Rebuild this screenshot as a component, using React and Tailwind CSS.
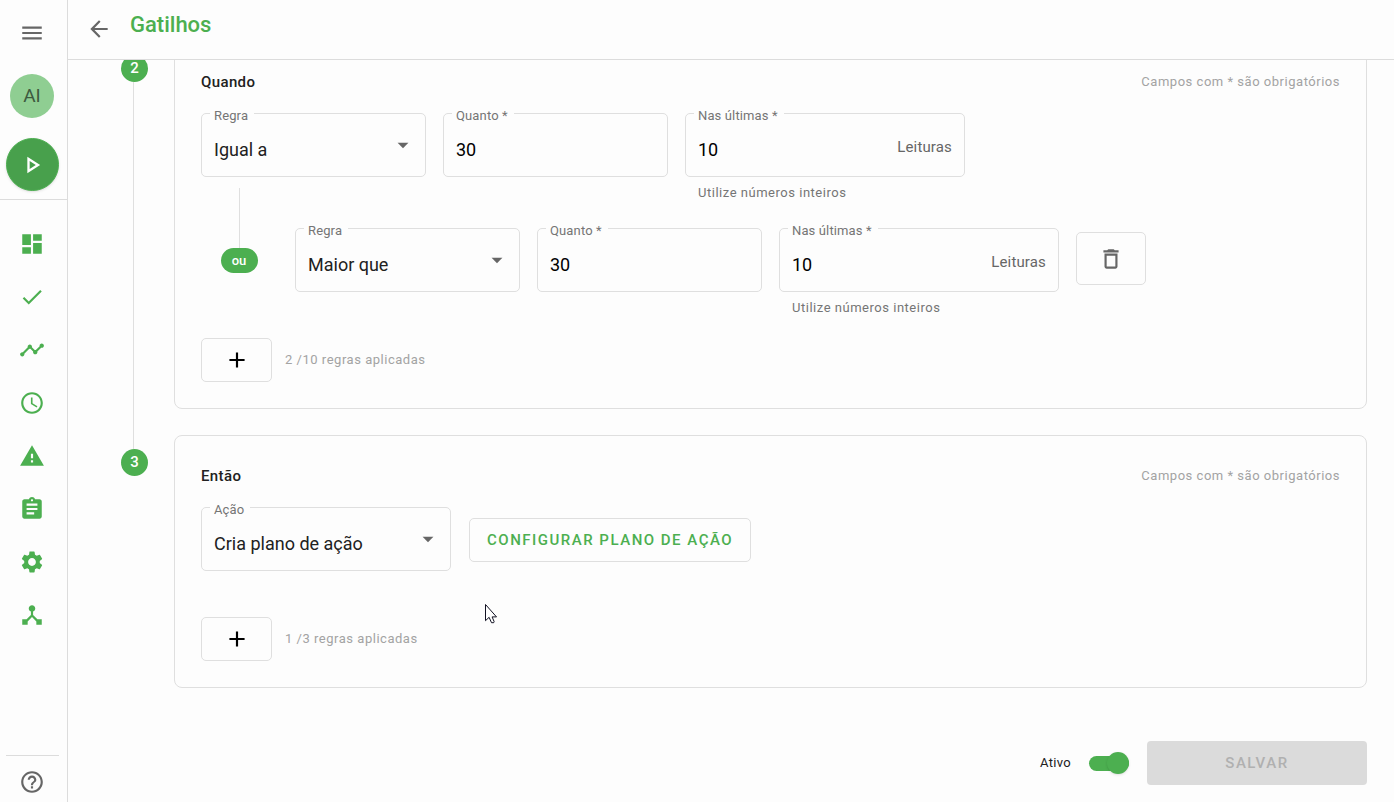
import React, { useState } from 'react';
import {
  MdAccessTime,
  MdAdd,
  MdArrowBack,
  MdArrowDropDown,
  MdAssignment,
  MdCheck,
  MdDashboard,
  MdDeviceHub,
  MdHelpOutline,
  MdMenu,
  MdOutlineDelete,
  MdOutlinePlayArrow,
  MdSettings,
  MdTimeline,
  MdWarning,
} from 'react-icons/md';

const NAV_ITEMS = [
  { icon: MdDashboard, href: '#painel' },
  { icon: MdCheck, href: '#checklist' },
  { icon: MdTimeline, href: '#leituras' },
  { icon: MdAccessTime, href: '#historico' },
  { icon: MdWarning, href: '#alertas' },
  { icon: MdAssignment, href: '#planos' },
  { icon: MdSettings, href: '#configuracoes' },
  { icon: MdDeviceHub, href: '#integracoes' },
];

const RULES = ['Igual a', 'Maior que', 'Menor que'];
const ACTIONS = ['Cria plano de ação', 'Envia e-mail'];

function Sidebar() {
  return (
    <aside className="flex w-[68px] shrink-0 flex-col border-r border-[#dcdcdc]">
      <div className="flex flex-col items-center border-b border-[#dcdcdc] pt-5 pr-[3px] pb-2">
        <button className="text-[#666]">
          <MdMenu size={26} />
        </button>
        <div className="mt-7 flex size-11 items-center justify-center rounded-full bg-[#8fce92] text-[19px] text-[#3d5a3f]">
          AI
        </div>
        <button className="mt-5 flex size-[53px] items-center justify-center rounded-full border border-[#4caf50] bg-[#48a04c] text-white shadow-sm">
          <MdOutlinePlayArrow size={28} />
        </button>
      </div>

      <nav className="flex flex-1 flex-col items-center gap-[27px] pt-[31px] pr-[3px] text-[#4caf50]">
        {NAV_ITEMS.map(({ icon: Icon, href }) => (
          <a key={href} href={href}>
            <Icon size={26} />
          </a>
        ))}
      </nav>

      <div className="mr-2 ml-1.5 flex justify-center border-t border-[#dcdcdc] pt-[13px] pr-0.5 pb-[7px] text-[#666]">
        <a href="#ajuda">
          <MdHelpOutline size={26} />
        </a>
      </div>
    </aside>
  );
}

// Rótulo que fica sobre a borda do campo
function FieldLabel({ htmlFor, children }) {
  return (
    <label
      htmlFor={htmlFor}
      className="absolute -top-2 left-2 bg-[#fdfdfd] pr-1.5 pl-1 text-[13px] leading-5 tracking-[0.01em] text-[#757575]"
    >
      {children}
    </label>
  );
}

function SelectField({ id, label, options, defaultValue, className }) {
  return (
    <div className={`relative h-16 rounded-[5px] border border-[#dfdfdf] ${className}`}>
      <FieldLabel htmlFor={id}>{label}</FieldLabel>
      <select
        id={id}
        defaultValue={defaultValue}
        className="h-full w-full appearance-none bg-transparent pt-2 pr-10 pl-3 text-[18px] text-[#212121] outline-none"
      >
        {options.map((option) => (
          <option key={option}>{option}</option>
        ))}
      </select>
      <MdArrowDropDown
        size={26}
        className="pointer-events-none absolute top-[18px] right-[9px] text-[#666]"
      />
    </div>
  );
}

function NumberField({ id, label, defaultValue, suffix, hint, className }) {
  return (
    <div className={className}>
      <div className="relative flex h-16 items-center rounded-[5px] border border-[#dfdfdf]">
        <FieldLabel htmlFor={id}>{label}</FieldLabel>
        <input
          id={id}
          type="text"
          inputMode="numeric"
          defaultValue={defaultValue}
          className="h-full w-full min-w-0 bg-transparent pt-2 pl-3 text-[18px] text-black outline-none"
        />
        {suffix && <span className="pt-1 pr-3 text-[15px] tracking-[0.01em] text-[#666]">{suffix}</span>}
      </div>
      {hint && <p className="pt-1.5 pl-[13px] text-[13px] leading-5 tracking-[0.04em] text-[#757575]">{hint}</p>}
    </div>
  );
}

function RuleFields({ id, rule }) {
  return (
    <>
      <SelectField id={`${id}-regra`} label="Regra" options={RULES} defaultValue={rule} className="w-[225px]" />
      <NumberField id={`${id}-quanto`} label="Quanto *" defaultValue="30" className="w-[225px]" />
      <NumberField
        id={`${id}-ultimas`}
        label="Nas últimas *"
        defaultValue="10"
        suffix="Leituras"
        hint="Utilize números inteiros"
        className="w-[280px]"
      />
    </>
  );
}

function AddRule({ count }) {
  return (
    <div className="mt-3.5 flex items-center gap-[13px]">
      <button className="flex h-11 w-[71px] items-center justify-center rounded-[5px] border border-[#dfdfdf] text-black">
        <MdAdd size={26} />
      </button>
      <span className="text-[13px] tracking-[0.04em] text-[#a3a3a3]">{count} regras aplicadas</span>
    </div>
  );
}

function StepBadge({ children }) {
  return (
    <span className="flex size-[27px] shrink-0 items-center justify-center rounded-full bg-[#4caf50] text-[15px] leading-none font-medium text-white">
      {children}
    </span>
  );
}

function StepCard({ title, children }) {
  return (
    <section className="min-w-0 flex-1 rounded-lg border border-[#dfdfdf] p-[26px]">
      <div className="mb-[17px] flex h-7 items-center justify-between">
        <h2 className="text-[15px] font-medium tracking-wide text-[#212121]">{title}</h2>
        <span className="text-[13px] tracking-[0.04em] text-[#a3a3a3]">Campos com * são obrigatórios</span>
      </div>
      {children}
    </section>
  );
}

export default function App() {
  const [active, setActive] = useState(true);

  return (
    <div className="flex h-screen bg-[#fdfdfd] font-['Roboto',sans-serif]">
      <Sidebar />

      <div className="flex min-w-0 flex-1 flex-col">
        <header className="flex h-[60px] shrink-0 items-start gap-[18px] border-b border-[#dcdcdc] pl-[18px]">
          <button className="mt-4 text-[#666]">
            <MdArrowBack size={26} />
          </button>
          <h1 className="mt-[9px] text-[22px] leading-8 font-medium text-[#4caf50]">Gatilhos</h1>
        </header>

        <main className="flex-1 overflow-hidden pr-[27px] pl-[53px]">
          <div className="-mt-[19px] flex gap-[26px]">
            <div className="flex flex-col items-center pt-3.5">
              <StepBadge>2</StepBadge>
              <div className="mr-0.5 w-px flex-1 bg-[#dfdfdf]" />
            </div>
            <div className="flex min-w-0 flex-1 pb-[26px]">
              <StepCard title="Quando">
                <div className="flex h-24 gap-[17px]">
                  <RuleFields id="regra-1" rule="Igual a" />
                </div>
                <div className="mt-[19px] flex h-24 gap-[17px]">
                  <div className="-mt-10 mr-px flex w-[76px] flex-col items-center">
                    <div className="h-[60px] w-px bg-[#dfdfdf]" />
                    <span className="flex h-[25px] w-[37px] items-center justify-center rounded-full bg-[#4caf50] text-[13px] font-medium text-white">
                      ou
                    </span>
                  </div>
                  <RuleFields id="regra-2" rule="Maior que" />
                  <button className="mt-1 flex h-[53px] w-[70px] items-center justify-center rounded-[5px] border border-[#dfdfdf] text-[#666]">
                    <MdOutlineDelete size={26} />
                  </button>
                </div>
                <AddRule count="2 /10" />
              </StepCard>
            </div>
          </div>

          <div className="flex gap-[26px]">
            <div className="flex flex-col items-center">
              <div className="mr-0.5 h-3.5 w-px bg-[#dfdfdf]" />
              <StepBadge>3</StepBadge>
            </div>
            <StepCard title="Então">
              <div className="flex h-24 gap-[18px]">
                <SelectField
                  id="acao"
                  label="Ação"
                  options={ACTIONS}
                  defaultValue="Cria plano de ação"
                  className="w-[250px]"
                />
                <button className="mt-[11px] h-11 rounded-[5px] border border-[#dfdfdf] px-[17px] text-[15px] font-medium tracking-widest text-[#4caf50] uppercase">
                  Configurar plano de ação
                </button>
              </div>
              <AddRule count="1 /3" />
            </StepCard>
          </div>

          <footer className="mt-[53px] flex items-center justify-end gap-[18px]">
            <label htmlFor="ativo" className="text-[13px] tracking-wide text-[#212121]">
              Ativo
            </label>
            <input
              id="ativo"
              type="checkbox"
              role="switch"
              checked={active}
              onChange={(e) => setActive(e.target.checked)}
              className="flex h-[15px] w-10 appearance-none items-center rounded-full bg-[#bdbdbd] before:size-[22px] before:shrink-0 before:rounded-full before:bg-[#4caf50] before:shadow-sm checked:justify-end checked:bg-[#4caf50]"
            />
            <button
              disabled
              className="h-11 w-[220px] rounded bg-[#dbdbdb] text-[15px] font-medium tracking-widest text-[#b0b0b0] uppercase"
            >
              Salvar
            </button>
          </footer>
        </main>
      </div>

      {/* Cursor do mouse */}
      <svg
        className="pointer-events-none absolute top-[604px] left-[485px]"
        width="13"
        height="20"
        viewBox="0 0 13 20"
        fill="#fff"
        stroke="#111122"
        strokeWidth="1"
      >
        <path d="M.5.5v16.2l3.6-3.4 2.4 5.4h2.2l.4-1.2-2-4.6h4.4z" />
      </svg>
    </div>
  );
}
